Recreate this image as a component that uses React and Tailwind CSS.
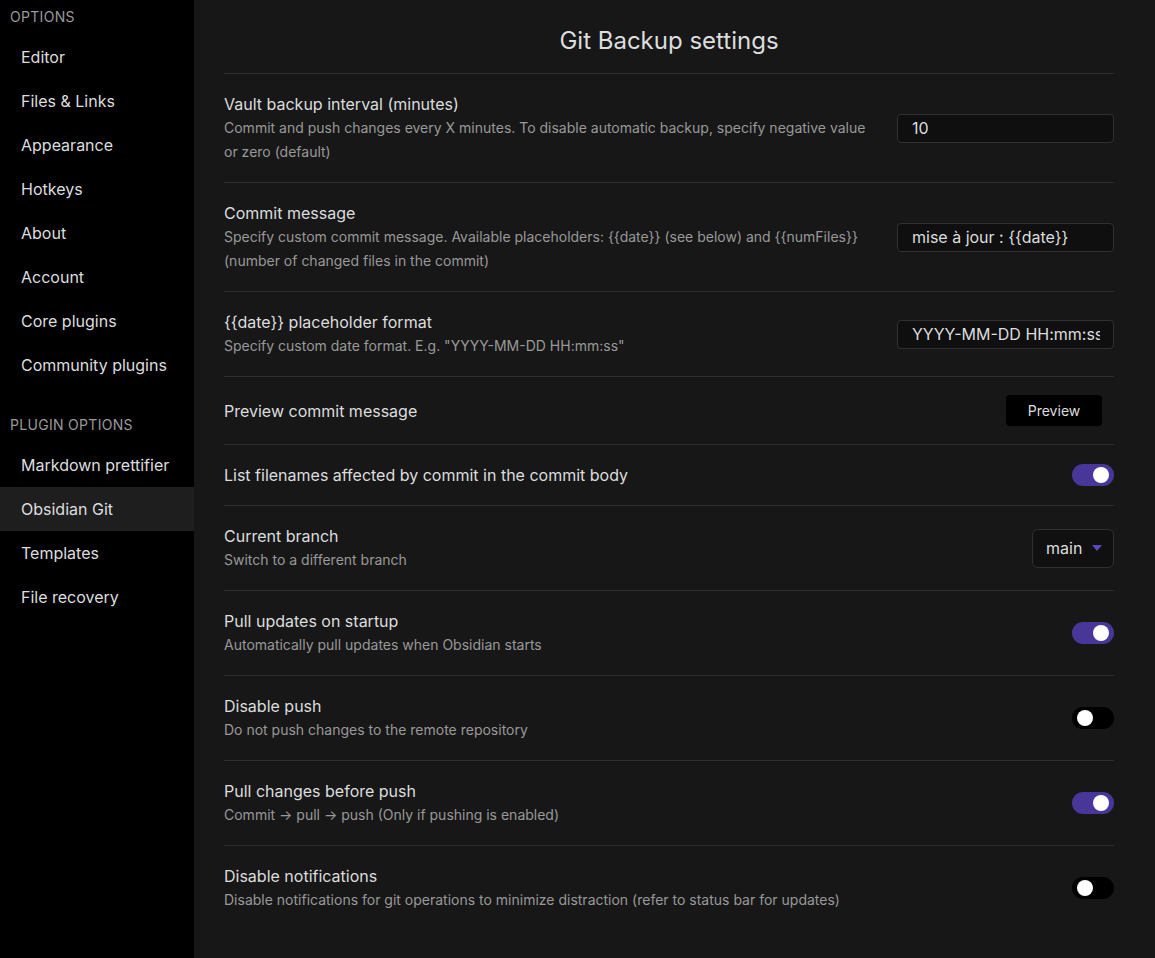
import React, { useState } from "react";

const optionItems = [
  "Editor",
  "Files & Links",
  "Appearance",
  "Hotkeys",
  "About",
  "Account",
  "Core plugins",
  "Community plugins",
];

const pluginItems = ["Markdown prettifier", "Obsidian Git", "Templates", "File recovery"];

const Toggle = ({ initial }) => {
  const [on, setOn] = useState(initial);
  return (
    <button
      type="button"
      onClick={() => setOn(!on)}
      className={`flex h-[22px] w-[42px] items-center rounded-full px-[5px] ${
        on ? "justify-end bg-[#483699]" : "justify-start bg-black"
      }`}
    >
      <span className="h-[16px] w-[16px] rounded-full bg-white" />
    </button>
  );
};

const TextInput = ({ value }) => (
  <input
    type="text"
    defaultValue={value}
    className="h-[29px] w-[217px] rounded-[4px] border border-[#303030] bg-[#0f0f0f] pl-[14px] pr-[13px] text-[16px] text-[#dcddde] outline-none"
  />
);

const SettingRow = ({ name, desc, children, last }) => (
  <div
    className={`flex items-center gap-[30px] py-[18px] ${last ? "" : "border-b border-[#2e2e2e]"}`}
  >
    <div className="w-[643px] shrink-0">
      <div className="text-[16px] leading-[24px] text-[#dcddde]">{name}</div>
      {desc && <div className="text-[14px] leading-[24px] text-[#999999]">{desc}</div>}
    </div>
    <div className="flex flex-1 justify-end">{children}</div>
  </div>
);

export default function App() {
  return (
    <div
      className="flex h-[958px] w-full overflow-hidden bg-[#171717]"
      style={{ fontFamily: "Inter, 'Noto Sans', sans-serif" }}
    >
      {/* Sidebar */}
      <div className="w-[194px] shrink-0 bg-black">
        <div className="px-[10px] pt-[7px] pb-[8px] text-[14px] leading-[20px] tracking-[0.3px] text-[#999999]">
          OPTIONS
        </div>
        {optionItems.map((item) => (
          <div key={item} className="flex h-[44px] items-center px-[21px] text-[16px] text-[#dcddde]">
            {item}
          </div>
        ))}
        <div className="px-[10px] pt-[28px] pb-[8px] text-[14px] leading-[20px] tracking-[0.3px] text-[#999999]">
          PLUGIN OPTIONS
        </div>
        {pluginItems.map((item) => (
          <div
            key={item}
            className={`flex h-[44px] items-center px-[21px] text-[16px] text-[#dcddde] ${
              item === "Obsidian Git" ? "bg-[#1e1e1e]" : ""
            }`}
          >
            {item}
          </div>
        ))}
      </div>

      {/* Settings */}
      <div className="flex-1 pl-[30px] pr-[41px]">
        <div className="border-b border-[#2e2e2e] pt-[26px] pb-[17px] text-center text-[24px] leading-[30px] text-[#dcddde]">
          Git Backup settings
        </div>

        <SettingRow
          name="Vault backup interval (minutes)"
          desc="Commit and push changes every X minutes. To disable automatic backup, specify negative value or zero (default)"
        >
          <TextInput value="10" />
        </SettingRow>

        <SettingRow
          name="Commit message"
          desc="Specify custom commit message. Available placeholders: {{date}} (see below) and {{numFiles}} (number of changed files in the commit)"
        >
          <TextInput value="mise à jour : {{date}}" />
        </SettingRow>

        <SettingRow
          name="{{date}} placeholder format"
          desc={'Specify custom date format. E.g. "YYYY-MM-DD HH:mm:ss"'}
        >
          <TextInput value="YYYY-MM-DD HH:mm:ss" />
        </SettingRow>

        <SettingRow name="Preview commit message">
          <button
            type="button"
            className="mr-[12px] h-[31px] w-[96px] rounded-[4px] bg-black text-[14px] text-[#dcddde]"
          >
            Preview
          </button>
        </SettingRow>

        <SettingRow name="List filenames affected by commit in the commit body">
          <Toggle initial={true} />
        </SettingRow>

        <SettingRow name="Current branch" desc="Switch to a different branch">
          <div className="-my-[7px] flex h-[39px] w-[82px] items-center gap-[10px] rounded-[6px] border border-[#303030] bg-[#101010] pl-[13px] text-[16px] text-[#dcddde]">
            <span>main</span>
            <svg width="10" height="6" viewBox="0 0 10 6">
              <path d="M0 0h10L5 6z" fill="#5a48c0" />
            </svg>
          </div>
        </SettingRow>

        <SettingRow name="Pull updates on startup" desc="Automatically pull updates when Obsidian starts">
          <Toggle initial={true} />
        </SettingRow>

        <SettingRow name="Disable push" desc="Do not push changes to the remote repository">
          <Toggle initial={false} />
        </SettingRow>

        <SettingRow
          name="Pull changes before push"
          desc="Commit → pull → push (Only if pushing is enabled)"
        >
          <Toggle initial={true} />
        </SettingRow>

        <SettingRow
          name="Disable notifications"
          desc="Disable notifications for git operations to minimize distraction (refer to status bar for updates)"
          last
        >
          <Toggle initial={false} />
        </SettingRow>
      </div>
    </div>
  );
}
